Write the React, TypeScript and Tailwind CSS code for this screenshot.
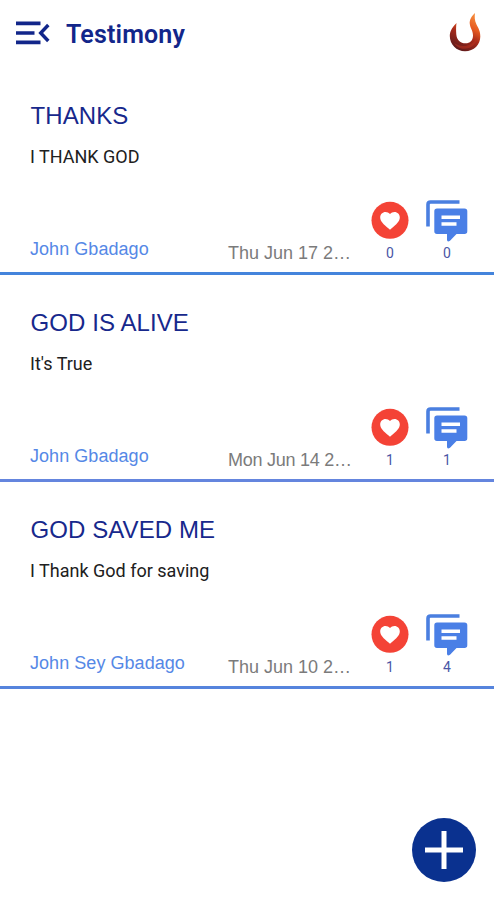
type Post = {
  title: string;
  body: string;
  author: string;
  date: string;
  dateTracking: string;
  likes: number;
  comments: number;
  rule: string;
};

const posts: Post[] = [
  { title: "THANKS", body: "I THANK GOD", author: "John Gbadago", date: "Thu Jun 17 2…", dateTracking: "tracking-normal", likes: 0, comments: 0, rule: "border-[#4484dc]" },
  { title: "GOD IS ALIVE", body: "It's True", author: "John Gbadago", date: "Mon Jun 14 2…", dateTracking: "tracking-[-0.25px]", likes: 1, comments: 1, rule: "border-[#6485de]" },
  { title: "GOD SAVED ME", body: "I Thank God for saving", author: "John Sey Gbadago", date: "Thu Jun 10 2…", dateTracking: "tracking-normal", likes: 1, comments: 4, rule: "border-[#5684dd]" },
];

function MenuIcon() {
  return (
    <svg width="34" height="24" viewBox="0 0 34 24" fill="none" stroke="#12268a" strokeWidth="3.6">
      <path d="M0 2.400h24.500M0 12h18.500M0 21.400h24.500" />
      <path d="M32.300 4l-7.600 8 7.600 8" strokeWidth="3.400" />
    </svg>
  );
}

function FlameLogo() {
  return (
    <svg width="32" height="40" viewBox="0 0 32 40">
      <defs>
        <linearGradient id="flame" x1="0.8" y1="0" x2="0.35" y2="1">
          <stop offset="0" stopColor="#f7913f" />
          <stop offset="0.35" stopColor="#e65a20" />
          <stop offset="0.6" stopColor="#a82a1a" />
          <stop offset="1" stopColor="#5c1a1c" />
        </linearGradient>
      </defs>
      <path
        d="M7.500 11C4.500 14 .8 18.500 .8 24C.8 32.500 7.500 39.300 16 39.300C25 39.300 31.300 32.500 31.300 24.500C31.300 19 29.500 16.500 27.500 12.500C25.500 8.500 25.500 5 26 1C22.500 4 20.300 8 20.800 12C21.300 16.500 24 18.500 24 23.500C24 28.500 21 31.300 16.500 31.300C11.500 31.300 7.800 28 7.300 22.500C7 18 7 14.500 7.500 11Z"
        fill="url(#flame)"
      />
      <path d="M5 31C13 36.500 24 34.500 28 25C28.500 33 20 38 12 36.500C9 35.500 6.500 33.500 5 31Z" fill="#b5301f" opacity=".6" />
    </svg>
  );
}

function HeartIcon() {
  return (
    <svg width="38" height="38" viewBox="0 0 38 38">
      <circle cx="19" cy="19.300" r="18.500" fill="#f44336" />
      <path
        d="M19 28.800l-1.400-1.200C12.500 23.100 9.200 20.100 9.200 16.400c0-3 2.400-5.300 5.300-5.300 1.700 0 3.400.8 4.500 2 1.100-1.200 2.800-2 4.500-2 2.900 0 5.300 2.300 5.300 5.300 0 3.700-3.300 6.700-8.400 11.200z"
        fill="#fff"
      />
    </svg>
  );
}

function CommentsIcon() {
  return (
    <svg width="42" height="42" viewBox="0 0 42 42">
      <path d="M2 26.500V4.500Q2 2 4.500 2H33.500" fill="none" stroke="#4a7fe0" strokeWidth="3.600" />
      <path
        d="M11 8.500H38.500Q41.300 8.500 41.300 11.300V31.300Q41.300 34 38.500 34H30.500L24 40.800Q21 42.500 21 39.500V34H11Q8.300 34 8.300 31.300V11.300Q8.300 8.500 11 8.500Z"
        fill="#4a7fe6"
      />
      <path d="M15.500 17.300H34M15.500 24H30.500" stroke="#fff" strokeWidth="3.400" />
    </svg>
  );
}

function Row({ post }: { post: Post }) {
  return (
    <article className={"flex h-[207px] flex-col justify-between border-b-[3px] pl-[30px] " + post.rule}>
      <div className="pt-[33px]">
        <h2 className="pl-[0.5px] text-[24px] leading-[30px] tracking-[0.08px] text-[#17288c]">{post.title}</h2>
        <p className="mt-[15px] font-['Roboto',sans-serif] text-[18px] leading-[22px] text-[#202020]">{post.body}</p>
      </div>
      <div className="flex h-[74px] items-end">
        <div className="w-[198px] pb-[12px] text-[18px] leading-[22px] tracking-[0.05px] text-[#5588e6]">{post.author}</div>
        <div className={"w-[143px] pb-[8px] text-[18px] leading-[22px] whitespace-nowrap text-[#7b7b7b] " + post.dateTracking}>{post.date}</div>
        <div className="flex h-[74px] w-[38px] flex-col items-center pt-[3px]">
          <HeartIcon />
          <span className="mt-[6px] font-['Roboto',sans-serif] text-[14px] leading-[16px] text-[#4a56a6]">{post.likes}</span>
        </div>
        <div className="ml-[17px] flex h-[74px] w-[42px] flex-col items-center pt-[2px]">
          <CommentsIcon />
          <span className="mt-[3px] font-['Roboto',sans-serif] text-[14px] leading-[16px] text-[#4a56a6]">{post.comments}</span>
        </div>
      </div>
    </article>
  );
}

export default function App() {
  return (
    <div className="flex h-[900px] w-[494px] flex-col overflow-hidden bg-white font-['Liberation_Sans',Arial,sans-serif]">
      <header className="flex h-[68px] shrink-0 items-center pr-[13px] pl-4">
        <div className="pb-[2px]">
          <MenuIcon />
        </div>
        <h1 className="ml-4 pt-[2px] font-['Roboto',sans-serif] text-[25px] leading-[30px] font-semibold tracking-[0.15px] text-[#12268a]">Testimony</h1>
        <div className="ml-auto pb-[4px]">
          <FlameLogo />
        </div>
      </header>
      <main className="shrink-0">
        {posts.map((post) => (
          <Row key={post.title} post={post} />
        ))}
      </main>
      <div className="mt-auto flex justify-end pr-[18px] pb-[18px]">
        <button aria-label="Add testimony" className="flex size-[64px] items-center justify-center rounded-full bg-[#0a318f]">
          <svg width="38" height="38" viewBox="0 0 38 38" stroke="#fff" strokeWidth="5">
            <path d="M19 0v38M0 19h38" />
          </svg>
        </button>
      </div>
    </div>
  );
}
